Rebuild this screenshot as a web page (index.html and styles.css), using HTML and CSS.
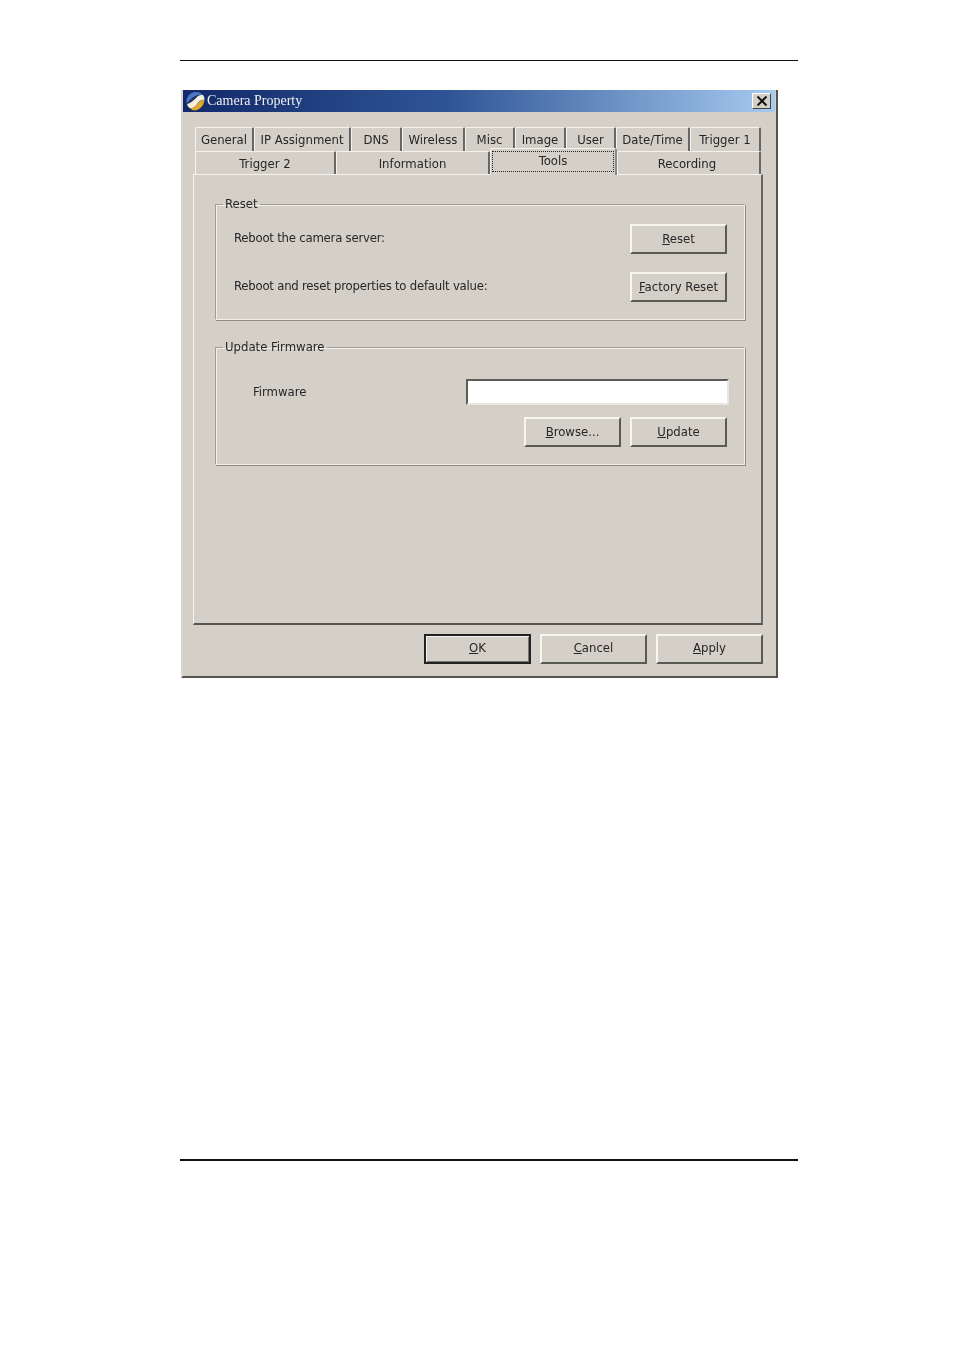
FILE: index.html
```html
<!DOCTYPE html>
<html lang="en">

<head>
    <meta charset="UTF-8">
    <title>Camera Property</title>
    <link rel="stylesheet" href="styles.css">
</head>

<body>
    <div id="page">
        <hr class="topRule">

        <div id="dialog">
            <div id="titleBar">
                <svg class="appIcon" width="20" height="20" viewBox="0 0 20 20">
                    <circle cx="10" cy="10" r="9.5" fill="#1d2f5e" />
                    <path d="M1.5 12C1 6 5 1 11 1c3 0 5 1 7 3-5-1-9 1-12 4-2 2-3 3-4.500 4z" fill="#4a78c8" />
                    <path d="M18 4c1 1 1.500 3 1.500 5-3-1-6 2-8 5-2 2-4 4-7 3-1-1-2-2-2.500-4 4-1 7-4 10-7 2-2 4-2 6-2z" fill="#f3efdc" />
                    <path d="M5 17.500c3 0 5-2 7-4 2-3 5-5 7.500-4.500C19 14 15 19 10 19.500c-2 0-3.500-1-5-2z" fill="#e2a92f" />
                </svg>
                <span class="titleText">Camera Property</span>
                <span class="closeBtn">
                    <svg width="12" height="10" viewBox="0 0 12 10">
                        <path d="M1.500 0.500l9 9M10.500 0.500l-9 9" stroke="#111" stroke-width="2" fill="none" />
                    </svg>
                </span>
            </div>

            <div class="tabRow rowOne">
                <div class="tab tabGeneral">General</div>
                <div class="tab tabIp">IP Assignment</div>
                <div class="tab tabDns">DNS</div>
                <div class="tab tabWireless">Wireless</div>
                <div class="tab tabMisc">Misc</div>
                <div class="tab tabImage">Image</div>
                <div class="tab tabUser">User</div>
                <div class="tab tabDate">Date/Time</div>
                <div class="tab tabTrigger1">Trigger 1</div>
            </div>
            <div class="tabRow rowTwo">
                <div class="tab tabTrigger2">Trigger 2</div>
                <div class="tab tabInfo">Information</div>
                <div class="tab tabTools active"><span class="focusBox">Tools</span></div>
                <div class="tab tabRecording">Recording</div>
            </div>

            <div id="panel">
                <fieldset class="group">
                    <legend>Reset</legend>
                    <div class="row">
                        <span>Reboot the camera server:</span>
                        <button class="btn"><u>R</u>eset</button>
                    </div>
                    <div class="row">
                        <span>Reboot and reset properties to default value:</span>
                        <button class="btn"><u>F</u>actory Reset</button>
                    </div>
                </fieldset>

                <fieldset class="group">
                    <legend>Update Firmware</legend>
                    <div class="fileRow">
                        <span>Firmware</span>
                        <div class="textBox"></div>
                    </div>
                    <div class="fileButtons">
                        <button class="btn"><u>B</u>rowse...</button>
                        <button class="btn"><u>U</u>pdate</button>
                    </div>
                </fieldset>
            </div>

            <div id="footerButtons">
                <button class="bigBtn default"><u>O</u>K</button>
                <button class="bigBtn"><u>C</u>ancel</button>
                <button class="bigBtn"><u>A</u>pply</button>
            </div>
        </div>

        <hr class="bottomRule">
    </div>
</body>

</html>
```

FILE: styles.css
```css
body {
    margin: 0;
    background: #fff;
}

#page {
    width: 618px;
    height: 1349px;
    margin-left: 180px;
    padding-top: 60px;
    box-sizing: border-box;
}

hr {
    margin: 0;
    border: 0;
    background: #111;
}

.topRule {
    height: 1px;
}

.bottomRule {
    height: 2px;
    margin-top: 481px;
}

#dialog {
    width: 597px;
    height: 588px;
    margin-top: 29px;
    margin-left: 1px;
    box-sizing: border-box;
    background: #d4d0c8;
    border-left: 2px solid #d8d5cd;
    border-right: 2px solid #55544f;
    border-bottom: 2px solid #55544f;
    font-family: "DejaVu Sans Condensed", "DejaVu Sans", sans-serif;
    font-size: 13px;
    color: #262626;
    filter: blur(0.4px);
}

#titleBar {
    height: 22px;
    margin-right: 1px;
    display: flex;
    align-items: center;
    padding: 0 4px 0 2px;
    background: linear-gradient(to right, #12296a, #2f5596 45%, #a6caf0);
}

.appIcon {
    flex: none;
}

.titleText {
    margin-left: 2px;
    font-family: "Liberation Serif", serif;
    font-size: 14px;
    color: #f0f0f0;
}

.closeBtn {
    margin-left: auto;
    width: 19px;
    height: 16px;
    box-sizing: border-box;
    display: flex;
    align-items: center;
    justify-content: center;
    background: #d4d0c8;
    border: 1px solid;
    border-color: #fff #444 #444 #fff;
}

.tabRow {
    display: flex;
    margin-left: 12px;
}

.rowOne {
    margin-top: 15px;
    height: 24px;
}

.rowTwo {
    height: 23px;
}

.tab {
    box-sizing: border-box;
    border-top: 1px solid #f4f3ee;
    border-left: 1px solid #f4f3ee;
    border-right: 2px solid #666;
    border-top-left-radius: 2px;
    border-top-right-radius: 2px;
    text-align: center;
    line-height: 24px;
    white-space: nowrap;
}

.tabGeneral { width: 59px; }
.tabIp { width: 97px; }
.tabDns { width: 51px; }
.tabWireless { width: 63px; }
.tabMisc { width: 50px; }
.tabImage { width: 51px; }
.tabUser { width: 50px; }
.tabDate { width: 74px; }
.tabTrigger1 { width: 71px; }
.tabTrigger2 { width: 141px; }
.tabInfo { width: 154px; }
.tabTools { width: 127px; }
.tabRecording { width: 144px; padding-right: 3px; }

.tab.active {
    position: relative;
    z-index: 1;
    margin-top: -3px;
    height: 27px;
    padding: 2px 1px 0 1px;
    border-right-color: #888;
    background: #d4d0c8;
    line-height: 20px;
}

.focusBox {
    display: block;
    height: 21px;
    border: 1px dotted #222;
    box-sizing: border-box;
    line-height: 18px;
}

#panel {
    height: 451px;
    margin-left: 10px;
    width: 570px;
    box-sizing: border-box;
    padding: 21px 16px 0 21px;
    border-top: 1px solid #f4f3ee;
    border-left: 1px solid #f4f3ee;
    border-right: 2px solid #666;
    border-bottom: 2px solid #555;
}

.group {
    box-sizing: border-box;
    margin: 0 0 19px 0;
    padding: 12px 17px 0 18px;
    border: 1px solid #a09d96;
    border-right-color: #f0efe9;
    border-bottom-color: #f0efe9;
    box-shadow: inset 1px 1px 0 #f0efe9, 1px 1px 0 #8e8c85;
    min-width: 0;
}

.group:first-child {
    height: 124px;
}

.group:last-child {
    height: 126px;
}

.group legend {
    margin-left: -11px;
    padding: 0 2px;
    line-height: 16px;
}

.row {
    height: 30px;
    margin-bottom: 18px;
    display: flex;
    justify-content: space-between;
    align-items: center;
}

.row span {
    margin-top: -3px;
    letter-spacing: -0.22px;
}

.btn,
.bigBtn {
    box-sizing: border-box;
    padding: 0 0 1px 0;
    background: #d4d0c8;
    font: inherit;
    color: inherit;
    border: 2px solid;
    border-color: #f6f5f0 #5a5a55 #5a5a55 #f6f5f0;
}

.btn {
    width: 97px;
    height: 30px;
}

.fileRow {
    display: flex;
    align-items: center;
    justify-content: space-between;
    padding-left: 19px;
    margin: 12px -2px 12px 0;
}

.fileRow span {
    margin-top: -1px;
}

.textBox {
    width: 263px;
    height: 26px;
    box-sizing: border-box;
    background: #fff;
    border: 2px solid;
    border-color: #5c5c58 #e8e6e0 #e8e6e0 #5c5c58;
}

.fileButtons {
    display: flex;
    justify-content: flex-end;
    gap: 9px;
}

#footerButtons {
    display: flex;
    justify-content: flex-end;
    gap: 9px;
    margin-top: 9px;
    margin-right: 13px;
}

.bigBtn {
    width: 107px;
    height: 30px;
    padding-bottom: 3px;
}

.bigBtn.default {
    border-color: #222;
    box-shadow: inset 1px 1px 0 #f6f5f0, inset -1px -1px 0 #777;
}
```
